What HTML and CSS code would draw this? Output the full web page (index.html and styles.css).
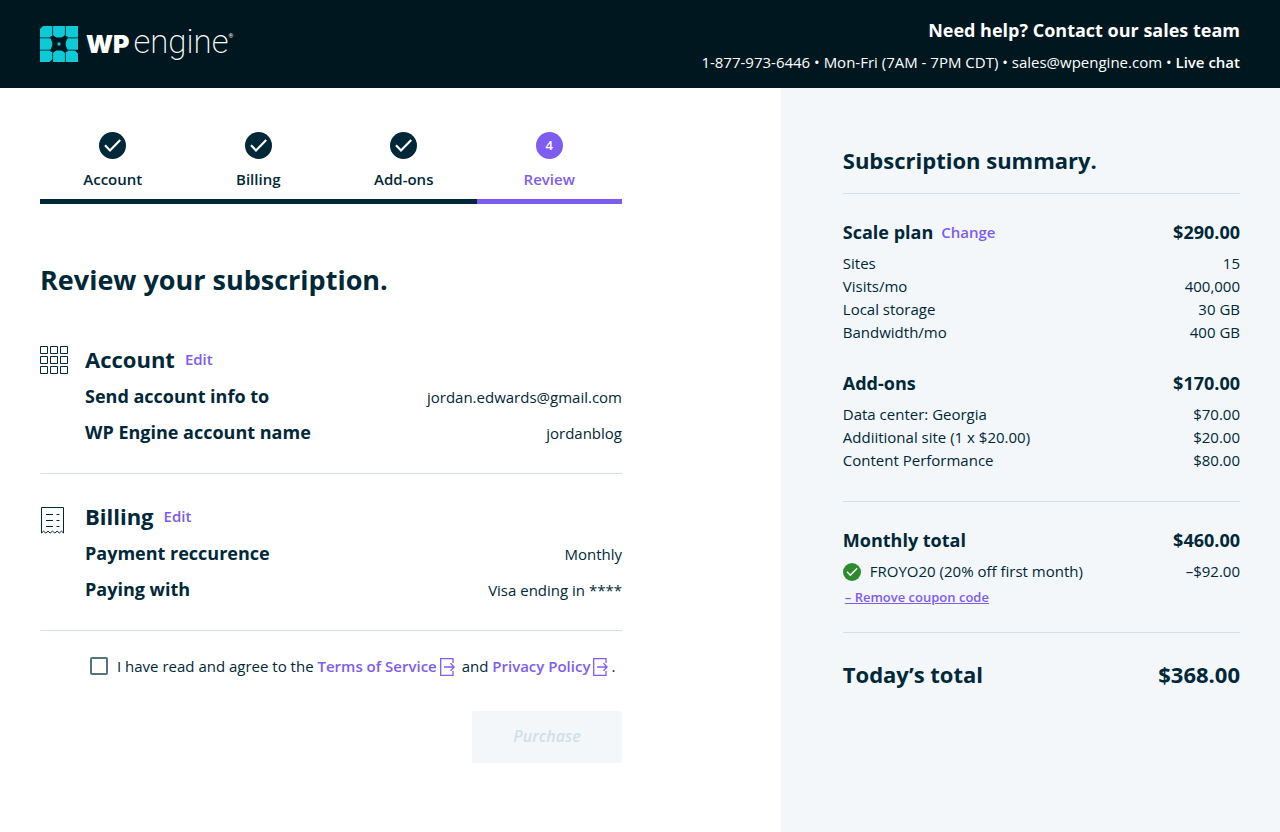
FILE: index.html
```html
<!DOCTYPE html>
<html lang="en">
<head>
<meta charset="utf-8">
<meta name="viewport" content="width=device-width, initial-scale=1">
<title>Review your subscription</title>
<link rel="stylesheet" href="styles.css">
</head>
<body>
<svg class="sprite" aria-hidden="true">
  <symbol id="check" viewBox="0 0 27 27">
    <circle cx="13.5" cy="13.5" r="13.5" fill="currentColor"/>
    <path d="M6 13.2l5 5.2L21.200 8" fill="none" stroke="#fff" stroke-width="2.200"/>
  </symbol>
  <symbol id="external" viewBox="0 0 15 18">
    <path d="M13 5V.7H.7v16.600H13V13M4 9h10M10.500 5.300L14.200 9l-3.700 3.700" fill="none" stroke="currentColor" stroke-width="1.300"/>
  </symbol>
</svg>
<header class="topbar">
  <a class="logo" href="#" aria-label="WP Engine">
    <svg class="logo-mark" viewBox="0 0 38 36" aria-hidden="true">
      <g fill="#0ecad4">
        <path d="M3 0h9.300v11.500H0V3z"/>
        <path d="M13.100 0h11.800v9l-2.500 2.500h-6.800L13.100 9z"/>
        <path d="M25.700 0H38v11.500H25.700z"/>
        <path d="M0 12.300h10l2.300 2.300v6.800L10 23.700H0z"/>
        <path d="M28 12.300h10v11.400H28l-2.300-2.300v-6.800z"/>
        <path d="M0 24.500h12.300v8.700L9.500 36H0z"/>
        <path d="M15.600 24.500h6.800l2.500 2.500v9H13.100v-9z"/>
        <path d="M25.700 24.500H35l3 3V36H25.700z"/>
      </g>
      <path fill="#00171f" d="M10.500 10l5 1 2 1.500h3l2-1.500 5-1-1 5-1.500 2v2l1.500 2 1 5-5-1-2-1.500h-3l-2 1.500-5 1 1-5 1.500-2v-2l-1.500-2z"/>
      <circle cx="19" cy="18" r="1.700" fill="#0ecad4"/>
    </svg>
    <span class="logo-wp">WP</span><span class="logo-engine">engine</span><span class="logo-reg">®</span>
  </a>
  <div class="help">
    <p class="help-title">Need help? Contact our sales team</p>
    <p class="help-line">1-877-973-6446 • Mon-Fri (7AM - 7PM CDT) • sales@wpengine.com • <a href="#">Live chat</a></p>
  </div>
</header>
<div class="page">
  <main class="review">
    <ol class="steps">
      <li class="step"><svg class="step-dot" aria-hidden="true"><use href="#check"/></svg>Account</li>
      <li class="step"><svg class="step-dot" aria-hidden="true"><use href="#check"/></svg>Billing</li>
      <li class="step"><svg class="step-dot" aria-hidden="true"><use href="#check"/></svg>Add-ons</li>
      <li class="step step-current" aria-current="step"><span class="step-dot">4</span>Review</li>
    </ol>
    <h1>Review your subscription.</h1>
    <section class="block">
      <svg class="block-icon" viewBox="0 0 28 28" fill="none" stroke="#002838" stroke-width="1" aria-hidden="true">
        <path d="M.5.5h7v7h-7zM10.500.5h7v7h-7zM20.500.5h7v7h-7zM.5 10.500h7v7h-7zM10.500 10.500h7v7h-7zM20.500 10.500h7v7h-7zM.5 20.500h7v7h-7zM10.500 20.500h7v7h-7zM20.500 20.500h7v7h-7z"/>
      </svg>
      <div class="block-body">
        <div class="block-head"><h2>Account</h2><a href="#">Edit</a></div>
        <dl class="details">
          <div><dt>Send account info to</dt><dd>jordan.edwards@gmail.com</dd></div>
          <div><dt>WP Engine account name</dt><dd>jordanblog</dd></div>
        </dl>
      </div>
    </section>
    <section class="block block-last">
      <svg class="block-icon block-receipt" viewBox="0 0 28 28" fill="none" stroke="#002838" stroke-width="1" aria-hidden="true">
        <path d="M1.500 27V1.500h22V27l-2-1.800-2.200 1.800-2.200-1.800-2.300 1.800-2.300-1.800-2.300 1.800L8 25.200 5.800 27l-2.200-1.800z"/>
        <path d="M6 8.500h7M16.500 8.500h3M6 14.500h7M16.500 14.500h3M6 20.500h7M16.500 20.500h3"/>
      </svg>
      <div class="block-body">
        <div class="block-head"><h2>Billing</h2><a href="#">Edit</a></div>
        <dl class="details">
          <div><dt>Payment reccurence</dt><dd>Monthly</dd></div>
          <div><dt>Paying with</dt><dd>Visa ending in ****</dd></div>
        </dl>
      </div>
    </section>
    <form class="confirm">
      <div class="agree">
        <input type="checkbox" id="agree">
        <label for="agree">I have read and agree to the <a href="#">Terms of Service<svg class="ext" aria-hidden="true"><use href="#external"/></svg></a> and <a href="#">Privacy Policy<svg class="ext" aria-hidden="true"><use href="#external"/></svg></a>.</label>
      </div>
      <button type="submit" class="purchase" disabled>Purchase</button>
    </form>
  </main>
  <aside class="summary">
    <h2>Subscription summary.</h2>
    <section class="group">
      <div class="line line-head"><h3>Scale plan</h3><a href="#">Change</a><b>$290.00</b></div>
      <div class="line"><span>Sites</span><span>15</span></div>
      <div class="line"><span>Visits/mo</span><span>400,000</span></div>
      <div class="line"><span>Local storage</span><span>30 GB</span></div>
      <div class="line"><span>Bandwidth/mo</span><span>400 GB</span></div>
      <div class="line line-head line-next"><h3>Add-ons</h3><b>$170.00</b></div>
      <div class="line"><span>Data center: Georgia</span><span>$70.00</span></div>
      <div class="line"><span>Addiitional site (1 x $20.00)</span><span>$20.00</span></div>
      <div class="line"><span>Content Performance</span><span>$80.00</span></div>
    </section>
    <section class="group group-total">
      <div class="line line-head"><h3>Monthly total</h3><b>$460.00</b></div>
      <div class="line"><span class="coupon"><svg class="coupon-ok" aria-hidden="true"><use href="#check"/></svg>FROYO20 (20% off first month)</span><span>–$92.00</span></div>
      <button type="button" class="remove">– Remove coupon code</button>
    </section>
    <div class="today"><h2>Today’s total</h2><b>$368.00</b></div>
  </aside>
</div>
</body>
</html>
```
FILE: styles.css
```css
* { box-sizing: border-box; }
body {
  margin: 0;
  min-height: 100vh;
  display: flex;
  flex-direction: column;
  background: #fff;
  color: #002838;
  font: 15px/24px "Open Sans", "Noto Sans", sans-serif;
}
h1, h2, h3, p, dl, dd, ol { margin: 0; padding: 0; }
a { color: #7e5cef; font-weight: 600; text-decoration: none; }
.sprite { display: none; }

.topbar {
  display: flex;
  justify-content: space-between;
  align-items: center;
  min-height: 88px;
  padding: 0 40px;
  background: #00171f;
  color: #fff;
}
.logo { display: flex; align-items: center; color: #fff; }
.logo-mark { width: 38px; height: 36px; margin-right: 8px; }
.logo-wp { font: 900 25px/36px Inter, sans-serif; }
.logo-engine { margin-left: 4px; padding-bottom: 4px; font: 200 33px/36px Roboto, sans-serif; }
.logo-reg { align-self: flex-start; font: 6px/24px Roboto, sans-serif; }
.help { padding-top: 4px; text-align: right; }
.help-title { font-size: 18px; font-weight: 700; line-height: 32px; }
.help-line { line-height: 32px; }
.help-line a { color: #fff; }

.page { flex: 1; display: grid; grid-template-columns: 61fr 39fr; }
.review { padding: 44px 40px 40px; }
.review > * { max-width: 582px; }
.steps { display: grid; grid-template-columns: repeat(4, 1fr); list-style: none; }
.step {
  display: flex;
  flex-direction: column;
  align-items: center;
  gap: 8px;
  padding-bottom: 8px;
  border-bottom: 5px solid #002838;
  font-weight: 600;
}
.step-dot { width: 27px; height: 27px; }
.step-current { color: #7e5cef; border-color: #7e5cef; }
.step-current .step-dot {
  border-radius: 50%;
  background: #7e5cef;
  color: #fff;
  font-size: 13px;
  line-height: 27px;
  text-align: center;
}
h1 { margin: 56px 0 43px; font-size: 27px; line-height: 40px; }
.block {
  display: flex;
  gap: 17px;
  margin-bottom: 26px;
  padding-bottom: 22px;
  border-bottom: 1px solid #d5dfe8;
}
.block-last { margin-bottom: 23px; }
.block-icon { width: 28px; height: 28px; margin-top: 3px; }
.block-receipt { margin-top: 6px; }
.block-body { flex: 1; }
.block-head { display: flex; align-items: center; gap: 10px; margin-bottom: 4px; }
.block-head h2 { font-size: 22px; line-height: 32px; }
.details > div { display: flex; justify-content: space-between; align-items: baseline; line-height: 35px; }
.details dt { font-size: 18px; font-weight: 700; }
.confirm { display: flex; flex-direction: column; gap: 33px; }
.agree { display: flex; align-items: center; gap: 9px; padding-left: 50px; white-space: nowrap; }
.agree input {
  appearance: none;
  flex: none;
  width: 18px;
  height: 18px;
  margin: 0;
  border: 2px solid #53747c;
  border-radius: 2px;
  background: #fff;
}
.agree input:checked { background: #7e5cef; }
.ext { width: 15px; height: 18px; margin: 0 3px; vertical-align: -4px; }
.purchase {
  align-self: flex-end;
  width: 150px;
  height: 52px;
  padding: 0 0 3px;
  border: 0;
  border-radius: 2px;
  background: #f3f7fa;
  color: #d1dfea;
  font: italic 600 16px/24px "Open Sans", sans-serif;
}

.summary { padding: 56px 40px 40px 62px; background: #f3f7fa; }
.summary h2 { font-size: 22px; line-height: 32px; }
.summary > h2 { padding-bottom: 17px; }
.group { padding: 26px 0 29px; border-top: 1px solid #d3e0ea; }
.line { display: flex; align-items: center; gap: 8px; line-height: 23px; }
.line > :last-child { margin-left: auto; }
.line-head { line-height: 24px; margin-bottom: 8px; }
.line-next { margin-top: 27px; }
.line h3, .line b { font-size: 18px; }
.group-total { padding-bottom: 23px; }
.coupon { display: flex; align-items: center; gap: 9px; }
.coupon-ok { width: 18px; height: 18px; color: #2f8a2f; }
.remove {
  margin-top: 2px;
  padding: 0 2px;
  border: 0;
  background: none;
  color: #7e5cef;
  font: 600 13px/24px "Open Sans", sans-serif;
  text-decoration: underline;
}
.today { display: flex; justify-content: space-between; padding-top: 25px; border-top: 1px solid #d3e0ea; font-size: 22px; line-height: 32px; }
```
